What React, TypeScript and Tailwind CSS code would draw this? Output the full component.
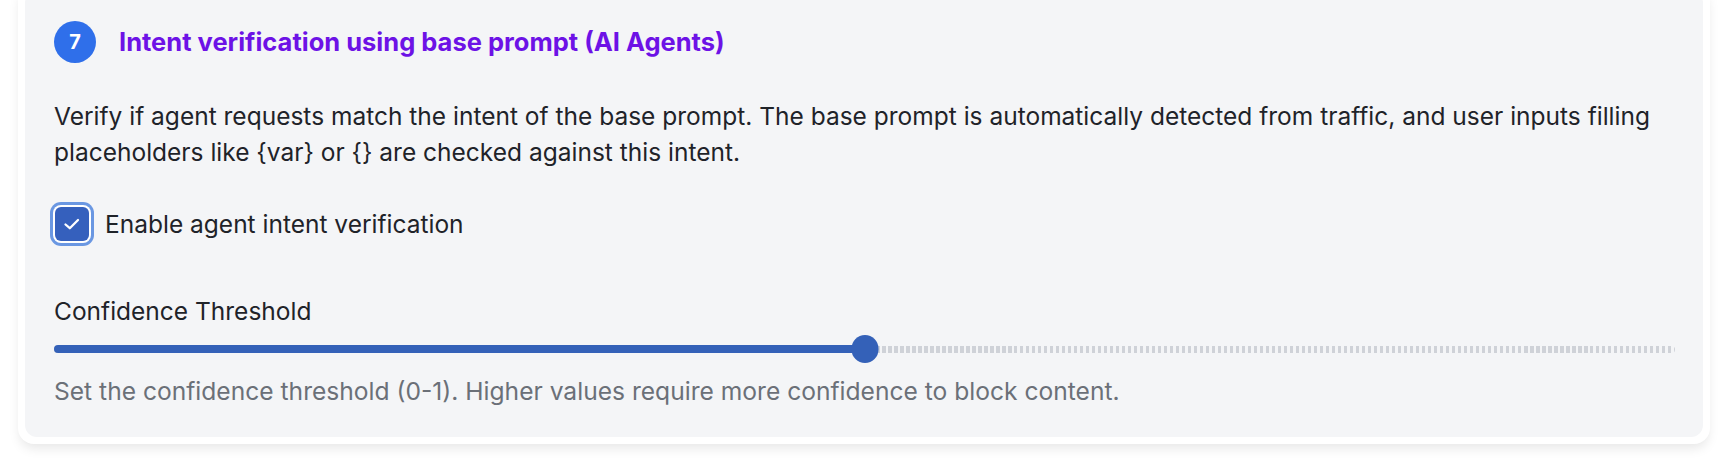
import React from 'react';

const font = { fontFamily: 'Inter, "Noto Sans", sans-serif' };

const DESCRIPTION =
  'Verify if agent requests match the intent of the base prompt. The base prompt is automatically detected from traffic, and user inputs filling placeholders like {var} or {} are checked against this intent.';

function CheckIcon() {
  return (
    <svg width="20" height="20" viewBox="0 0 20 20" fill="none">
      <polyline points="3.5 10.5 7.8 14.2 16 6" stroke="white" strokeWidth="2.3" strokeLinecap="round" strokeLinejoin="round" />
    </svg>
  );
}

function Slider({ value }: { value: number }) {
  const pct = `${value * 100}%`;
  return (
    <div className="relative h-7 flex items-center">
      <div className="w-full h-[7px] rounded-full bg-[repeating-linear-gradient(90deg,#cfd2d8_0px,#cfd2d8_3.5px,transparent_3.5px,transparent_6px)]" />
      <div className="absolute left-0 h-2 rounded-full bg-[#3461b8]" style={{ width: pct }} />
      <div
        className="absolute w-[27px] h-[28px] rounded-full bg-[#3461b8] -translate-x-1/2"
        style={{ left: pct }}
      />
    </div>
  );
}

export default function App() {
  return (
    <div className="min-h-[460px] bg-white pt-px" style={font}>
      <div className="-mt-[17px] mx-[18px] p-[7px] bg-white rounded-2xl shadow-[0_6px_12px_-2px_rgba(0,0,0,0.1)]">
        <div className="bg-[#f4f5f7] rounded-xl pl-[29px] pr-[28px] pt-[30px] pb-[30px]">
          <div className="flex items-center gap-[23px]">
            <div className="w-[42px] h-[42px] rounded-full bg-[#2f6fea] text-white flex items-center justify-center text-[20px] font-bold">
              7
            </div>
            <h3 className="text-[25.5px] font-bold text-[#6d12e6]">
              Intent verification using base prompt (AI Agents)
            </h3>
          </div>

          <p className="mt-[35px] text-[24.5px] leading-[36px] text-[#1f2329]">{DESCRIPTION}</p>

          <label className="mt-[36px] flex items-center gap-4 h-9">
            <span className="ml-px w-[34px] h-[34px] rounded-md bg-[#3560bd] flex items-center justify-center ring-[3px] ring-[#6a97e2] ring-offset-2 ring-offset-white">
              <CheckIcon />
            </span>
            <span className="text-[24.5px] text-[#1f2329]">Enable agent intent verification</span>
          </label>

          <div className="mt-[51px] text-[24.5px] leading-[36px] text-[#1f2329]">Confidence Threshold</div>

          <div className="mt-[6px]">
            <Slider value={0.5} />
          </div>

          <p className="mt-[12px] text-[24.6px] leading-[32px] text-[#6b7078]">
            Set the confidence threshold (0-1). Higher values require more confidence to block content.
          </p>
        </div>
      </div>
    </div>
  );
}
